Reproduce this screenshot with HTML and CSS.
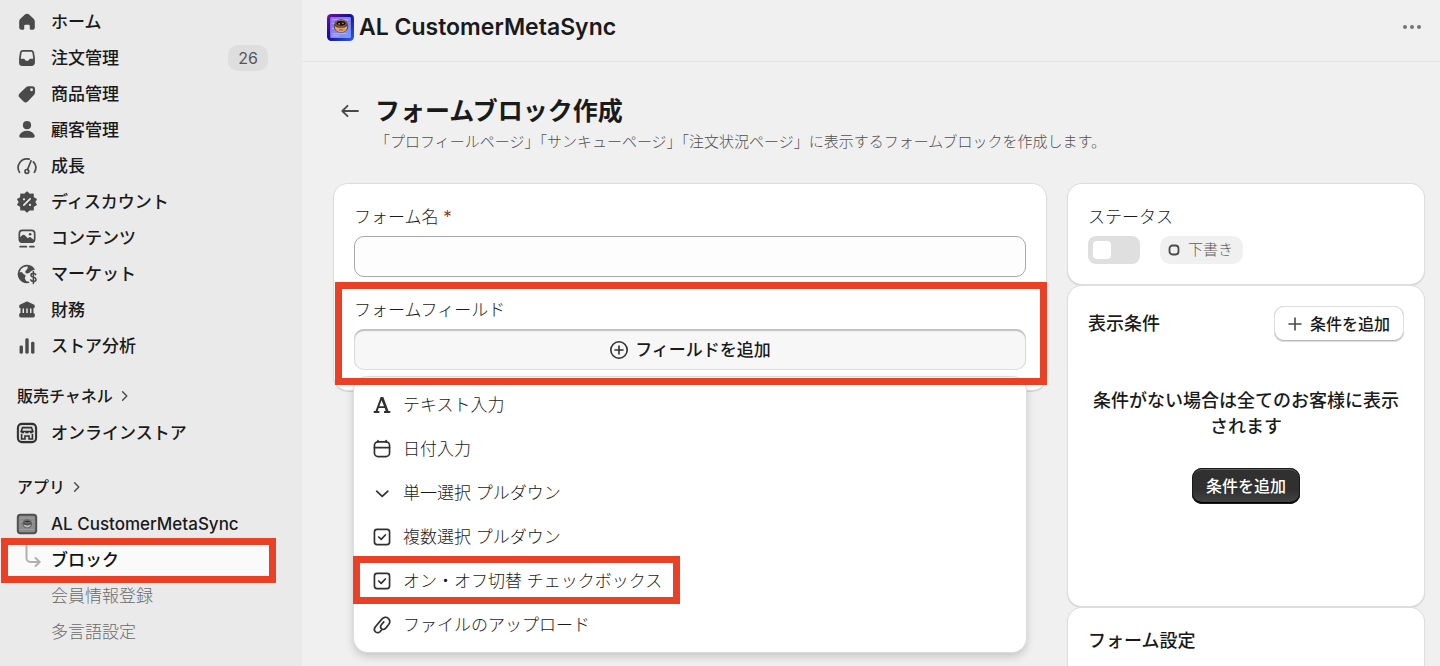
FILE: index.html
```html
<!DOCTYPE html>
<html lang="ja">
<head>
  <meta charset="UTF-8">
  <meta name="viewport" content="width=device-width, initial-scale=1.0">
  <title>AL CustomerMetaSync</title>
  <link rel="stylesheet" href="styles.css">
</head>
<body>
  <div class="app">

    <!-- Sidebar -->
    <nav class="sidebar">
      <ul class="nav-list">
        <li><a class="nav-item" href="#">
          <svg class="icon" viewBox="0 0 20 20"><path d="M8.3 3.8a2.6 2.6 0 0 1 3.4 0l3.6 3.2c.8.7 1.2 1.7 1.2 2.7v4.8c0 1.100-.9 2-2 2h-1.200a1 1 0 0 1-1-1v-2.300a1 1 0 0 0-1-1h-2.600a1 1 0 0 0-1 1v2.300a1 1 0 0 1-1 1h-1.200a2 2 0 0 1-2-2v-4.800c0-1 .4-2 1.200-2.700z"/></svg>
          <span>ホーム</span></a></li>
        <li><a class="nav-item" href="#">
          <svg class="icon" viewBox="0 0 20 20"><path fill-rule="evenodd" d="M6.600 3.300h6.800c1.300 0 2.300.9 2.500 2.100l.7 4.600v4c0 1.600-1.200 2.700-2.700 2.700h-7.800a2.700 2.700 0 0 1-2.700-2.700v-4l.7-4.600c.2-1.200 1.200-2.100 2.500-2.100zm.1 1.400c-.6 0-1.100.4-1.200 1l-.7 5h2.500c.5 0 .8.300 1 .7.200.5.600.8 1.100.8h1.200c.5 0 .9-.3 1.100-.8.2-.4.500-.7 1-.7h2.500l-.7-5c-.1-.6-.6-1-1.200-1z"/></svg>
          <span>注文管理</span><span class="nav-count">26</span></a></li>
        <li><a class="nav-item" href="#">
          <svg class="icon" viewBox="0 0 20 20"><path fill-rule="evenodd" d="M11.400 3.500h3a2.300 2.300 0 0 1 2.300 2.300v3c0 .8-.3 1.500-.9 2.100l-5 5.200a2.700 2.700 0 0 1-3.900 0l-2.900-2.900a2.700 2.700 0 0 1 0-3.900l5.200-5c.6-.5 1.300-.8 2.200-.8zm2.400 4.200a1.200 1.200 0 1 0 0-2.400 1.200 1.200 0 0 0 0 2.400z"/></svg>
          <span>商品管理</span></a></li>
        <li><a class="nav-item" href="#">
          <svg class="icon" viewBox="0 0 20 20"><circle cx="10" cy="6" r="3.400"/><path d="M3.600 14.600c.9-2.400 3.500-3.900 6.400-3.900s5.500 1.500 6.400 3.900c.4 1-.4 1.900-1.400 1.900H5c-1 0-1.800-.9-1.400-1.900z"/></svg>
          <span>顧客管理</span></a></li>
        <li><a class="nav-item" href="#">
          <svg class="icon line" viewBox="0 0 20 20"><path d="M3.800 15.300a7.300 7.300 0 0 1 8-11M15.300 6.600a7.300 7.300 0 0 1 .9 8.700M10.400 13l3-7.400"/><circle cx="9.900" cy="14.500" r="1.600"/></svg>
          <span>成長</span></a></li>
        <li><a class="nav-item" href="#">
          <svg class="icon" viewBox="0 0 20 20"><path d="M10 1.700l2.200 2 2.900-.3.100 2.900 2.500 1.500L16.400 10l1.300 2.200-2.500 1.500-.1 2.900-2.900-.3-2.200 2-2.200-2-2.900.3-.1-2.900-2.500-1.500L3.600 10 2.300 7.800l2.500-1.500.1-2.900 2.900.3z" stroke="#4a4a4a" stroke-width="1" stroke-linejoin="round"/><g fill="none" stroke="#ebebeb" stroke-width="1.400" stroke-linecap="round"><path d="M7.400 12.600l5.200-5.200"/><path d="M7.500 7.700v.1M12.500 12.300v.1" stroke-width="1.800"/></g></svg>
          <span>ディスカウント</span></a></li>
        <li><a class="nav-item" href="#">
          <svg class="icon" viewBox="0 0 20 20"><rect x="3.600" y="3.600" width="12.800" height="9.800" rx="2.600" fill="none" stroke="#4a4a4a" stroke-width="1.400"/><path d="M3.500 10l2.500-2.200c.7-.6 1.500-.6 2.200 0l2.400 2.400.6-.5c.7-.6 1.500-.6 2.200 0l3 2.300c-.2 1.100-1.300 2-2.600 2H6.200c-1.500 0-2.700-1.200-2.700-2.600z"/><circle cx="12.600" cy="6.900" r="1.100"/><path d="M4.300 17.200h5.200M12.500 17.200h3.200" stroke="#4a4a4a" stroke-width="1.400" stroke-linecap="round"/></svg>
          <span>コンテンツ</span></a></li>
        <li><a class="nav-item" href="#">
          <svg class="icon" viewBox="0 0 20 20"><path d="M15.700 6a7 7 0 1 0-4.500 10.900" fill="none" stroke="#4a4a4a" stroke-width="1.400" stroke-linecap="round"/><path d="M3 9l2.300-.6c1.400.3 1.200 1.700 2.400 2.100 1.400.5 1.300 1.700.6 2.500-.4.700.3 2 1.800 3.900C6 17.200 2.700 13.600 3 9zM9 9.300c-1.100-1.300 0-2.400.9-3 .8-.6.300-1.800 1.200-3 2 .3 3.600 1.300 4.600 2.700-.6 1.400-2 .9-2.700 1.900-.7 1-1.900 2.200-4 1.400z"/><path d="M17.200 10.500c-.4-.8-1-1.100-2-1.100-1.100 0-1.900.7-1.900 1.700 0 2.300 4.200 1.100 4.200 3.400 0 1.100-.9 1.700-2.200 1.700-1.100 0-1.800-.5-2.200-1.300M15.300 8v9.900" fill="none" stroke="#4a4a4a" stroke-width="1.300" stroke-linecap="round"/></svg>
          <span>マーケット</span></a></li>
        <li><a class="nav-item" href="#">
          <svg class="icon" viewBox="0 0 20 20"><path d="M9.300 3.100c.4-.2 1-.2 1.400 0l4.900 2.300c1.300.6 1.200 3-.2 3.100v3.900c.7.100 1.100.5 1.100 1.200v1.500c0 .7-.5 1.200-1.200 1.200H4.700c-.7 0-1.200-.5-1.200-1.200v-1.500c0-.7.4-1.100 1.100-1.200V8.500C3.200 8.400 3.100 6 4.400 5.400z"/><path d="M6.900 8.800v3.600M10 8.800v3.600M13.100 8.800v3.600" stroke="#ebebeb" stroke-width="1.200"/></svg>
          <span>財務</span></a></li>
        <li><a class="nav-item" href="#">
          <svg class="icon" viewBox="0 0 20 20"><rect x="3.800" y="9.500" width="2.800" height="7" rx="1.200"/><rect x="8.600" y="3.500" width="2.800" height="13" rx="1.200"/><rect x="13.400" y="6.500" width="2.800" height="10" rx="1.200"/></svg>
          <span>ストア分析</span></a></li>
      </ul>

      <a class="nav-heading" href="#">販売チャネル
        <svg class="chevron" viewBox="0 0 10 10"><path d="M3 1.500L6.500 5 3 8.500"/></svg></a>
      <ul class="nav-list">
        <li><a class="nav-item" href="#">
          <svg class="icon" viewBox="0 0 20 20"><rect x="2.400" y="2.400" width="15.200" height="15.200" rx="3.400" fill="#dcdcdc" stroke="#303030" stroke-width="1.700"/><path d="M6.300 5.500h7.400l1.200 3.200H5.100zM5.500 10.800v4.200h2.800v-2.500h3.400V15h2.800v-4.200" fill="none" stroke="#303030" stroke-width="1.300"/><path d="M5 8.500h2.500v1.800H5.500zM8.700 8.500h2.600v1.800H8.700zM12.500 8.500H15l-.5 1.800h-2z" fill="#303030"/></svg>
          <span>オンラインストア</span></a></li>
      </ul>

      <a class="nav-heading" href="#">アプリ
        <svg class="chevron" viewBox="0 0 10 10"><path d="M3 1.500L6.500 5 3 8.500"/></svg></a>
      <ul class="nav-list">
        <li><a class="nav-item" href="#">
          <svg class="icon" viewBox="0 0 20 20"><rect x="2.300" y="2.300" width="15.400" height="15.400" rx="2.200" fill="#8c8c8c" stroke="#4f4f4f" stroke-width="1.600"/><path d="M4.500 5h11M4.500 8h11M4.500 14.500h11" stroke="#a0a0a0" stroke-width=".8"/><ellipse cx="10.200" cy="9.800" rx="3.900" ry="3.700" fill="#555"/><path d="M7 10.300c1.500 1.200 4.900 1.200 6.400 0-.1 1.600-1.400 2.700-3.200 2.700s-3.100-1.100-3.200-2.700z" fill="#bbb"/><ellipse cx="10.200" cy="7.900" rx="2.600" ry="1.100" fill="#333" stroke="#999" stroke-width=".5"/></svg>
          <span>AL CustomerMetaSync</span></a>
          <ul class="sub-list">
            <li class="highlight sub-current">
              <svg class="branch" viewBox="0 0 16 32"><path d="M1.500 0v20a4 4 0 0 0 4 4h9M10.500 20l4.200 4-4.200 4"/></svg>
              <a class="sub-item active" href="#">ブロック</a></li>
            <li><a class="sub-item" href="#">会員情報登録</a></li>
            <li><a class="sub-item" href="#">多言語設定</a></li>
          </ul>
        </li>
      </ul>
    </nav>

    <main class="main">
      <!-- App bar -->
      <header class="app-bar">
        <svg class="app-logo" viewBox="0 0 26 26">
          <defs>
            <linearGradient id="logo-edge" x1="0" y1="0" x2="1" y2="1">
              <stop offset="0" stop-color="#7a0f9b"/>
              <stop offset=".45" stop-color="#14108f"/>
              <stop offset="1" stop-color="#2b62e8"/>
            </linearGradient>
            <linearGradient id="logo-face" x1="0" y1="0" x2="1" y2="1">
              <stop offset="0" stop-color="#8d6df2"/>
              <stop offset="1" stop-color="#7c9cf6"/>
            </linearGradient>
          </defs>
          <rect width="26" height="26" rx="4" fill="url(#logo-edge)"/>
          <rect x="3" y="3" width="20" height="20" rx="1" fill="url(#logo-face)"/>
          <path d="M5 5.500h16M5 9h3M5 14h2M5 19h14M5 21h7" stroke="#b7b4fb" stroke-width="1"/>
          <ellipse cx="13.500" cy="11.500" rx="7" ry="6.500" fill="#6b3d2a"/>
          <path d="M7.500 11.500c2.500 2.400 9.500 2.400 12 0 .2 3.500-2.600 6-6 6s-6.200-2.500-6-6z" fill="#dba677"/>
          <ellipse cx="13.500" cy="9" rx="5" ry="2.900" fill="#1c1412" stroke="#b07a50" stroke-width=".8"/>
          <path d="M11 9.500h1.500M14.500 9h1.500" stroke="#e0b48c" stroke-width="1"/>
          <path d="M11.500 15.300h4" stroke="#8a5433" stroke-width="1"/>
        </svg>
        <span class="app-name">AL CustomerMetaSync</span>
        <button class="more" type="button" aria-label="その他">
          <svg viewBox="0 0 20 6"><circle cx="3" cy="3" r="2"/><circle cx="10" cy="3" r="2"/><circle cx="17" cy="3" r="2"/></svg>
        </button>
      </header>

      <div class="page">
        <div class="page-header">
          <a class="back" href="#" aria-label="戻る">
            <svg viewBox="0 0 24 24"><path d="M20 12H4.500M9.500 6.800L4.300 12l5.200 5.200"/></svg>
          </a>
          <div>
            <h1>フォームブロック作成</h1>
            <p>「プロフィールページ」「サンキューページ」「注文状況ページ」に表示するフォームブロックを作成します。</p>
          </div>
        </div>

        <div class="columns">
          <!-- Form -->
          <section class="card">
            <div class="field">
              <label for="form-name">フォーム名 <span class="required">*</span></label>
              <input class="text-input" type="text" id="form-name">
            </div>
            <div class="field highlight form-fields">
              <span class="label" id="fields-label">フォームフィールド</span>
              <button class="add-field" type="button" aria-describedby="fields-label">
                <svg viewBox="0 0 20 20"><circle cx="10" cy="10" r="8.200"/><path d="M10 6v8M6 10h8"/></svg>
                フィールドを追加
              </button>
              <ul class="popover">
                <li><button class="option" type="button">
                  <svg class="icon" viewBox="0 0 20 20"><path d="M8.900 3.300h2.200l4.300 11.600h1.500v1.700h-5.200v-1.700h1.400l-.8-2.300H7.200l-.8 2.300h1.400v1.700H3.100v-1.700h1.500zm.7 2.700L7.800 11h3.900z"/></svg>
                  テキスト入力</button></li>
                <li><button class="option" type="button">
                  <svg class="icon line" viewBox="0 0 20 20"><rect x="3.700" y="4" width="12.600" height="12.300" rx="3"/><path d="M3.700 8.800h12.600M6.600 3v1M13.400 3v1"/></svg>
                  日付入力</button></li>
                <li><button class="option" type="button">
                  <svg class="icon line" viewBox="0 0 20 20"><path d="M5.500 8.500l4.700 4.300 4.700-4.300"/></svg>
                  単一選択 プルダウン</button></li>
                <li><button class="option" type="button">
                  <svg class="icon line" viewBox="0 0 20 20"><rect x="3.700" y="3.700" width="12.600" height="12.600" rx="2.200"/><path d="M7.300 10l2 2 3.500-3.700"/></svg>
                  複数選択 プルダウン</button></li>
                <li><button class="option highlight" type="button">
                  <svg class="icon line" viewBox="0 0 20 20"><rect x="3.700" y="3.700" width="12.600" height="12.600" rx="2.200"/><path d="M7.300 10l2 2 3.500-3.700"/></svg>
                  オン・オフ切替 チェックボックス</button></li>
                <li><button class="option" type="button">
                  <svg class="icon line" viewBox="0 0 20 20"><path d="M9.300 14.500l-1 1.100a2.700 2.700 0 0 1-4-.2c-1.100-1.200-.7-2.800.2-3.900l5.200-6.200c1.500-1.900 3.900-2.300 5.500-.9 1.700 1.500 1.500 3.700.2 5.400l-2.300 2.800c-1 1.200-2.500 1.500-3.500.6s-1-2.300-.1-3.400l2-2.400"/></svg>
                  ファイルのアップロード</button></li>
              </ul>
            </div>
          </section>

          <!-- Side cards -->
          <aside class="side">
            <section class="card">
              <label for="status">ステータス</label>
              <div class="status-row">
                <input class="toggle" type="checkbox" id="status">
                <span class="badge"><svg viewBox="0 0 12 12"><rect x="1.500" y="1.500" width="9" height="9" rx="3"/></svg>下書き</span>
              </div>
            </section>
            <section class="card">
              <div class="card-header">
                <h2>表示条件</h2>
                <button class="btn" type="button">
                  <svg viewBox="0 0 14 14"><path d="M7 1v12M1 7h12"/></svg>
                  条件を追加
                </button>
              </div>
              <div class="empty">
                <p>条件がない場合は全てのお客様に表示されます</p>
                <button class="btn btn-primary" type="button">条件を追加</button>
              </div>
            </section>
            <section class="card settings">
              <h2>フォーム設定</h2>
            </section>
          </aside>
        </div>
      </div>
    </main>
  </div>
</body>
</html>
```
FILE: styles.css
```css
* {
  box-sizing: border-box;
}

body {
  margin: 0;
  font-family: Inter, "Noto Sans CJK JP", sans-serif;
  font-size: 17px;
  line-height: 24px;
  color: #1a1a1a;
  background: #f0f0f0;
}

h1, h2, p, ul {
  margin: 0;
  padding: 0;
}

ul {
  list-style: none;
}

a {
  color: inherit;
  text-decoration: none;
}

button, input {
  font: inherit;
  color: inherit;
}

button {
  cursor: pointer;
}

.app {
  display: flex;
  height: 100vh;
  overflow: hidden;
}

/* Icons */
.icon {
  width: 24px;
  height: 24px;
  flex: none;
  fill: #4a4a4a;
}

.icon.line {
  fill: none;
  stroke: #4a4a4a;
  stroke-width: 1.4;
  stroke-linecap: round;
  stroke-linejoin: round;
}

/* Red frame */
.highlight {
  position: relative;
}

.highlight::after {
  content: '';
  position: absolute;
  border: 7px solid #ea4025;
  pointer-events: none;
  z-index: 5;
}

/* Sidebar */
.sidebar {
  width: 302px;
  flex: none;
  padding-top: 4px;
  background: #eaeaea;
}

.nav-item {
  display: flex;
  align-items: center;
  gap: 12px;
  height: 36px;
  padding: 0 34px 0 15px;
  font-weight: 500;
}

.nav-count {
  margin-left: auto;
  width: 40px;
  border-radius: 10px;
  background: #dedede;
  color: #555;
  font-size: 16px;
  font-weight: 400;
  line-height: 26px;
  text-align: center;
}

.nav-heading {
  display: flex;
  align-items: center;
  gap: 6px;
  padding: 0 17px;
  font-size: 16px;
  font-weight: 500;
  line-height: 24px;
}

.nav-heading + .nav-list {
  padding-top: 7px;
}

.nav-list + .nav-heading {
  margin-top: 20px;
}

.nav-list + .nav-heading ~ .nav-heading {
  margin-top: 24px;
}

.chevron {
  width: 12px;
  height: 12px;
  fill: none;
  stroke: #4a4a4a;
  stroke-width: 1.2;
  stroke-linecap: round;
  stroke-linejoin: round;
}

.sub-item {
  display: block;
  padding: 6px 0 6px 51px;
  color: #6a6a6a;
  font-weight: 300;
}

.sub-item.active {
  background: #fafafa;
  color: #111;
  font-weight: 500;
}

.sub-current {
  margin: 0 27px 0 3px;
}

.sub-current .sub-item {
  padding-left: 48px;
}

.sub-current::after {
  inset: -4px -1px -5px -2px;
}

.branch {
  position: absolute;
  left: 22px;
  top: -4px;
  width: 16px;
  height: 32px;
  fill: none;
  stroke: #b0b0b0;
  stroke-width: 2;
  stroke-linecap: round;
  stroke-linejoin: round;
}

/* App bar */
.main {
  flex: 1;
  min-width: 0;
}

.app-bar {
  display: flex;
  align-items: center;
  gap: 5px;
  height: 62px;
  padding: 0 18px 7px 25px;
  border-bottom: 1px solid #e4e4e4;
}

.app-logo {
  width: 27px;
  height: 27px;
}

.app-name {
  font-size: 23px;
  font-weight: 600;
  line-height: 32px;
}

.more {
  display: flex;
  margin-left: auto;
  padding: 8px 0;
  border: 0;
  background: none;
}

.more svg {
  width: 20px;
  height: 6px;
  fill: #757575;
}

/* Page */
.page {
  padding: 33px 16px 0 32px;
}

.page-header {
  display: flex;
  gap: 13px;
  margin-bottom: 31px;
  padding-left: 4px;
}

.back svg {
  display: block;
  width: 24px;
  height: 32px;
  fill: none;
  stroke: #4a4a4a;
  stroke-width: 1.8;
  stroke-linecap: round;
  stroke-linejoin: round;
}

h1 {
  font-size: 25px;
  font-weight: 700;
  line-height: 32px;
}

.page-header p {
  margin-top: 4px;
  font-size: 15px;
  font-weight: 300;
  line-height: 22px;
  color: #505050;
}

.columns {
  display: grid;
  grid-template-columns: 2fr 1fr;
  align-items: start;
  gap: 22px;
}

.card {
  padding: 20px;
  border-radius: 14px;
  background: #fff;
  box-shadow: 0 0 0 1px #dedede, 0 1px 1px 1px #d0d0d0;
}

.side {
  display: grid;
  gap: 2px;
}

label, .label {
  display: block;
  margin-bottom: 6px;
  font-weight: 300;
  line-height: 26px;
}

.required {
  color: #8e1f0b;
}

/* Form */
.text-input {
  display: block;
  width: 100%;
  height: 41px;
  padding: 0 14px;
  border: 1px solid #a8a8a8;
  border-radius: 10px;
  background: #fdfdfd;
}

.field + .field {
  margin-top: 20px;
}

.form-fields::after {
  inset: -15px -21px -15px -19px;
}

.add-field {
  display: flex;
  align-items: center;
  justify-content: center;
  gap: 6px;
  width: 100%;
  height: 41px;
  border: 0;
  border-radius: 10px;
  background: #f7f7f7;
  box-shadow: inset 0 2px 1px #c0c0c0, inset 0 0 0 1px #dcdcdc;
  font-weight: 500;
}

.add-field svg {
  width: 20px;
  height: 20px;
  fill: none;
  stroke: #303030;
  stroke-width: 1.6;
  stroke-linecap: round;
}

.popover {
  position: absolute;
  z-index: 2;
  top: 100%;
  left: 0;
  right: 0;
  margin-top: 7px;
  padding: 6px 0 5px;
  border-radius: 14px;
  background: #fff;
  box-shadow: 0 0 0 1px #dcdcdc, 0 4px 10px rgba(0, 0, 0, 0.2);
}

.option {
  display: flex;
  align-items: center;
  gap: 9px;
  height: 44px;
  padding: 0 16px;
  border: 0;
  background: none;
  font-weight: 300;
}

.option .icon {
  fill: #303030;
}

.option .icon.line {
  fill: none;
  stroke: #303030;
}

.option.highlight::after {
  inset: -3px -2px -1px -1px;
}

/* Status */
.status-row {
  display: flex;
  align-items: center;
  gap: 20px;
}

.toggle {
  appearance: none;
  width: 52px;
  height: 28px;
  margin: 0;
  padding: 5px;
  border-radius: 8px;
  background: #dfdfdf;
}

.toggle::before {
  content: '';
  display: block;
  width: 18px;
  height: 18px;
  border-radius: 4px;
  background: #fff;
}

.badge {
  display: flex;
  align-items: center;
  gap: 8px;
  padding: 0 10px 0 8px;
  border-radius: 10px;
  background: #f0f0f0;
  color: #5a5a5a;
  font-size: 15px;
  font-weight: 300;
  line-height: 28px;
}

.badge svg {
  width: 12px;
  height: 12px;
  fill: none;
  stroke: #4a4a4a;
  stroke-width: 1.8;
}

/* Conditions */
.card-header {
  display: flex;
  align-items: center;
  justify-content: space-between;
}

h2 {
  font-size: 18px;
  font-weight: 500;
  line-height: 26px;
}

.btn {
  display: flex;
  align-items: center;
  gap: 8px;
  height: 36px;
  padding: 0 14px;
  border: 0;
  border-radius: 10px;
  background: #fff;
  box-shadow: inset 0 0 0 1px #dedede, inset 0 -1px 0 1px #b8b8b8;
  font-size: 16px;
  font-weight: 500;
}

.btn svg {
  width: 14px;
  height: 14px;
  fill: none;
  stroke: #4a4a4a;
  stroke-width: 1.6;
  stroke-linecap: round;
}

.btn-primary {
  background: linear-gradient(#303030 60%, #454545);
  box-shadow: inset 0 0 0 1px #1a1a1a, inset 0 2px 0 #5c5c5c, inset 0 -2px 0 #000;
  color: #fff;
}

.empty {
  display: flex;
  flex-direction: column;
  align-items: center;
  gap: 28px;
  padding: 46px 0 82px;
}

.empty p {
  font-size: 18px;
  font-weight: 500;
  line-height: 26px;
  text-align: center;
}

.settings {
  min-height: 120px;
}
```
